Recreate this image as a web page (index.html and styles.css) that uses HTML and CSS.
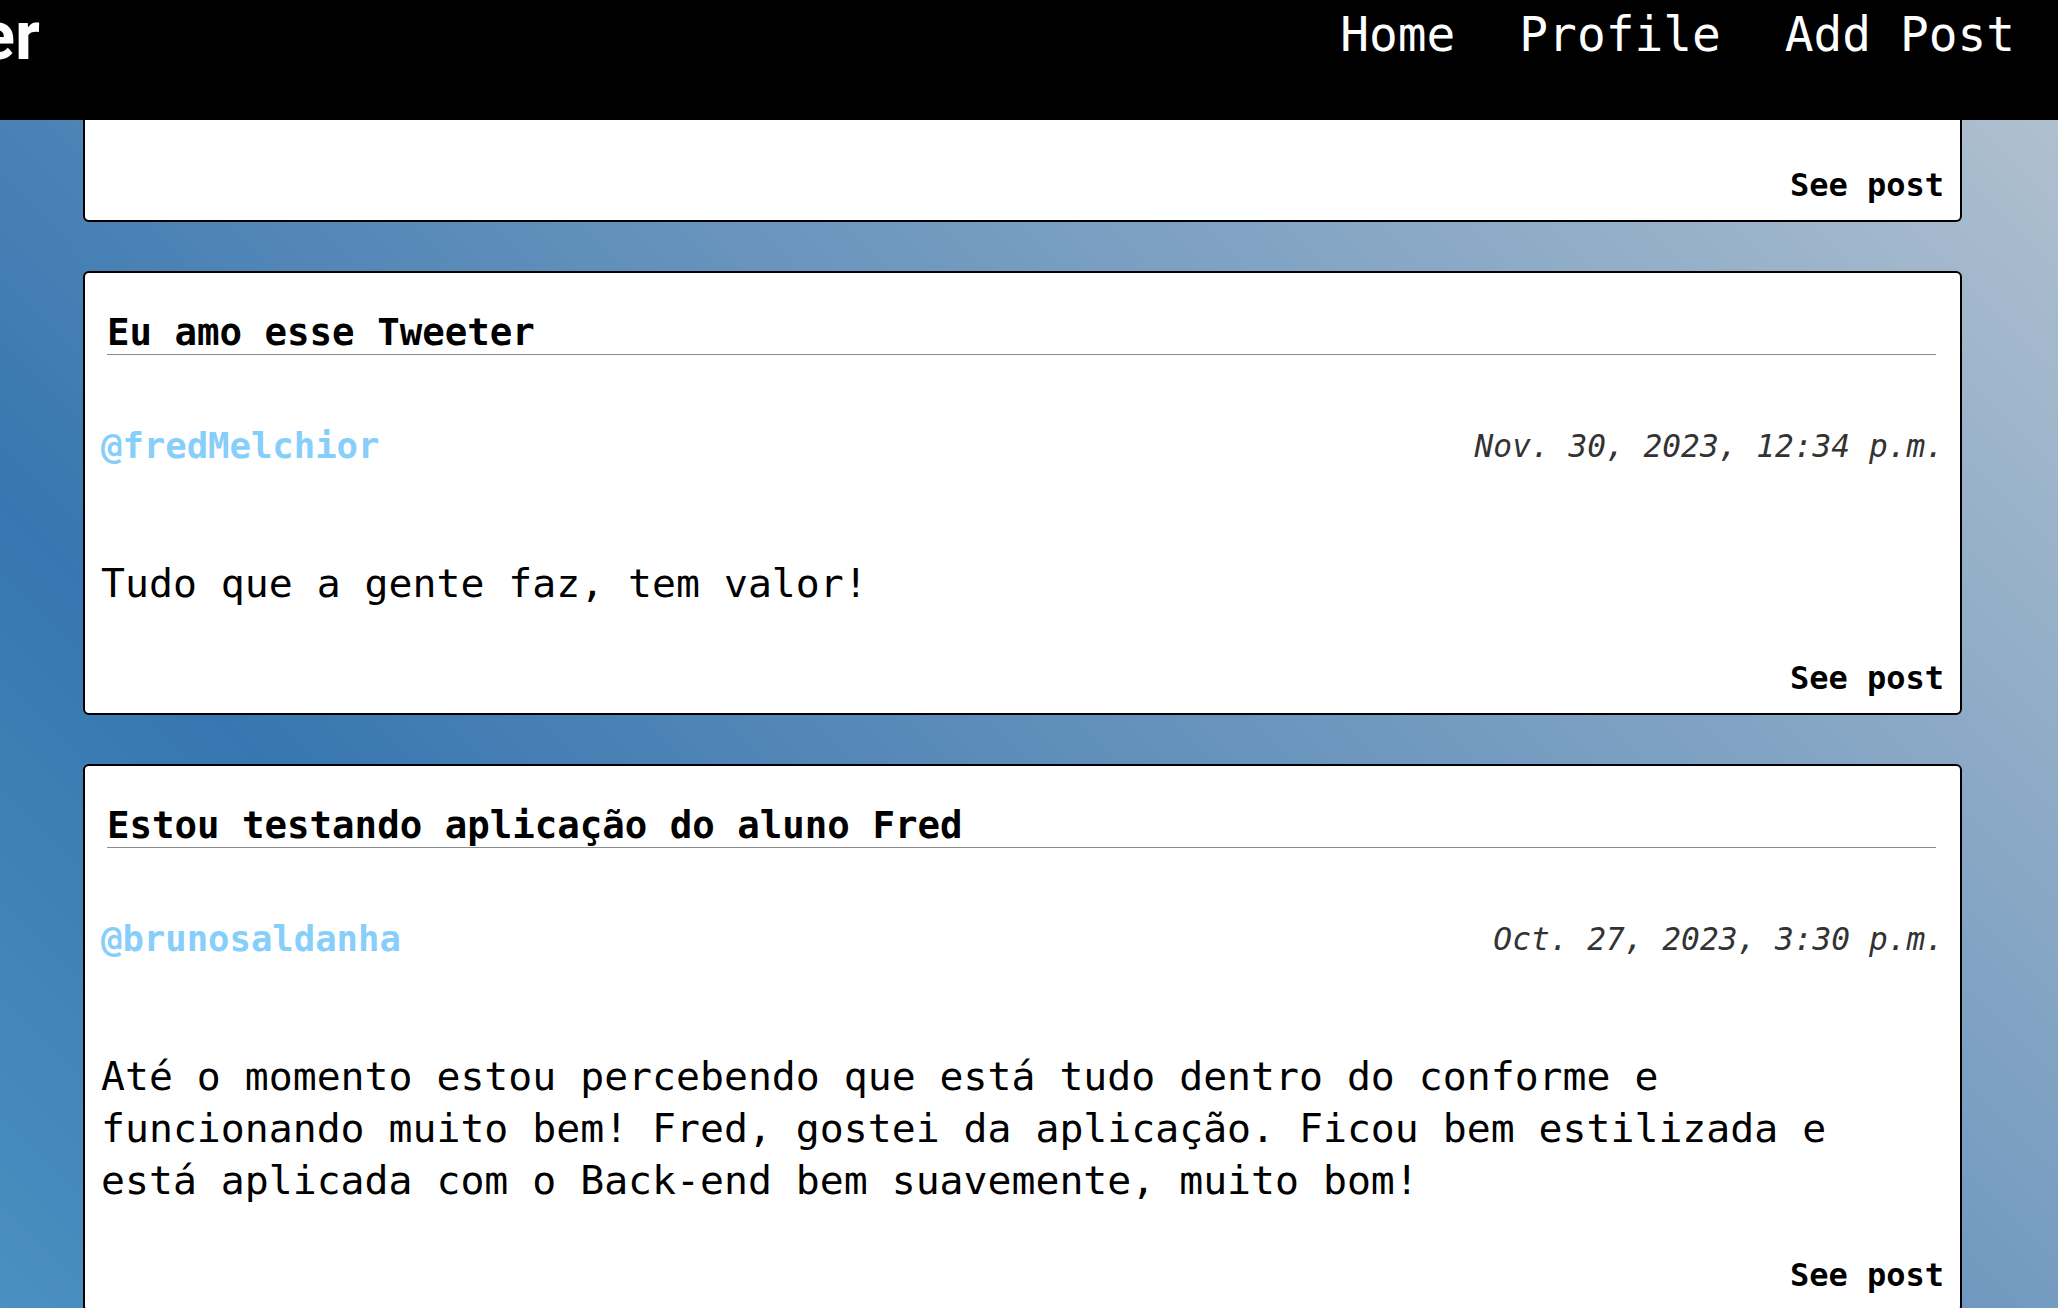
FILE: index.html
```html
<!DOCTYPE html>
<html lang="pt-BR">
<head>
<meta charset="utf-8">
<title>Tweeter</title>
<link rel="stylesheet" href="styles.css">
</head>
<body>
<header class="topbar">
  <div class="brand"><span class="brand__text">Tweeter</span></div>
  <nav class="nav">
    <a class="nav__link" href="#">Home</a>
    <a class="nav__link" href="#">Profile</a>
    <a class="nav__link" href="#">Add Post</a>
  </nav>
</header>
<main class="feed">
  <article class="post post--cut">
    <div class="post__footer"><a class="post__link" href="#">See post</a></div>
  </article>
  <article class="post">
    <h2 class="post__title">Eu amo esse Tweeter</h2>
    <div class="post__meta">
      <span class="post__author">@fredMelchior</span>
      <span class="post__date">Nov. 30, 2023, 12:34 p.m.</span>
    </div>
    <p class="post__body">Tudo que a gente faz, tem valor!</p>
    <div class="post__footer"><a class="post__link" href="#">See post</a></div>
  </article>
  <article class="post">
    <h2 class="post__title">Estou testando aplicação do aluno Fred</h2>
    <div class="post__meta">
      <span class="post__author">@brunosaldanha</span>
      <span class="post__date">Oct. 27, 2023, 3:30 p.m.</span>
    </div>
    <p class="post__body">Até o momento estou percebendo que está tudo dentro do conforme e funcionando muito bem! Fred, gostei da aplicação. Ficou bem estilizada e está aplicada com o Back-end bem suavemente, muito bom!</p>
    <div class="post__footer"><a class="post__link" href="#">See post</a></div>
  </article>
</main>
</body>
</html>
```
FILE: styles.css
```css
html, body {
  margin: 0;
  height: 100%;
  overflow: hidden;
}

body {
  background: linear-gradient(45deg, #4a90c0 0%, #3776b0 24%, #b5c3d1 100%);
  font-family: "DejaVu Sans Mono", "Liberation Mono", monospace;
  color: #000;
}

.topbar {
  display: flex;
  justify-content: space-between;
  align-items: flex-start;
  height: 120px;
  background: #000;
}

.brand {
  width: 40px;
  overflow: hidden;
  display: flex;
  justify-content: flex-end;
}

.brand__text {
  flex-shrink: 0;
  font-family: Roboto, "DejaVu Sans", sans-serif;
  font-weight: 700;
  font-size: 68px;
  line-height: 72px;
  color: #fff;
  white-space: nowrap;
}

.nav {
  display: flex;
  gap: 64px;
  padding: 7px 43px 0 0;
}

.nav__link {
  color: #fff;
  font-size: 47.8px;
  line-height: 56px;
  text-decoration: none;
  white-space: nowrap;
}

.feed {
  display: flex;
  flex-direction: column;
  gap: 49px;
  padding: 0 96px 0 83px;
}

.post {
  background: #fff;
  border: 2px solid #000;
  border-radius: 6px;
  padding: 37px 16px 15px;
}

.post--cut {
  border-top: none;
  border-radius: 0 0 6px 6px;
  padding-top: 45px;
}

.post__title {
  margin: 0 8px 0 6px;
  font-size: 37.4px;
  line-height: 44px;
  font-weight: 700;
  border-bottom: 1px solid #8a8a8a;
}

.post__meta {
  display: flex;
  justify-content: space-between;
  align-items: center;
  margin-top: 69px;
}

.post__author {
  color: #87cefa;
  font-weight: 700;
  font-size: 35.6px;
  line-height: 44px;
}

.post__date {
  font-style: italic;
  font-size: 31.2px;
  line-height: 44px;
  color: #333;
}

.post__body {
  margin: 89px 0 0;
  font-size: 39.8px;
  line-height: 52px;
}

.post__footer {
  display: flex;
  justify-content: flex-end;
  margin-top: 49px;
}

.post--cut .post__footer {
  margin-top: 0;
}

.post__link {
  font-size: 32px;
  line-height: 40px;
  font-weight: 700;
  color: #000;
  text-decoration: none;
}
```
